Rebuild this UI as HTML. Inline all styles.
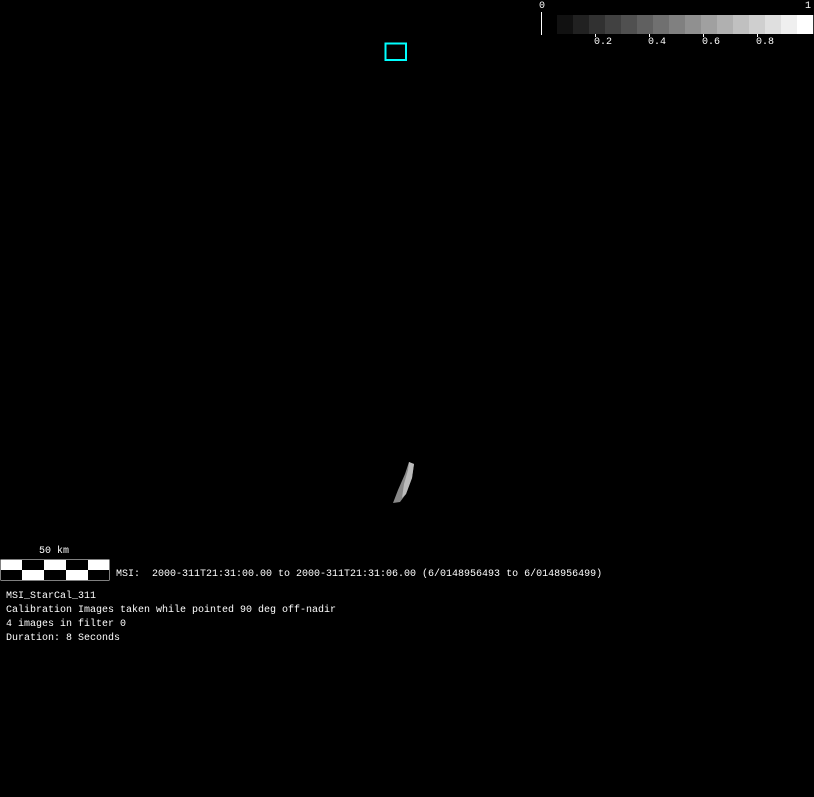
<!DOCTYPE html>
<html><head><meta charset="utf-8"><style>
body{margin:0;width:814px;height:797px;background:#000;position:relative;overflow:hidden;font-family:"Liberation Mono",monospace;font-size:10px;color:#fff}
.a{position:absolute;white-space:pre;line-height:12px}
</style></head><body>
<svg width="814" height="797" style="position:absolute;left:0;top:0">
<rect x="385.5" y="43.5" width="20.5" height="16.5" fill="none" stroke="#0ff" stroke-width="2"/>
<line x1="541.5" y1="12" x2="541.5" y2="35" stroke="#fff"/>
<g id="cb"></g>
<line x1="595.5" y1="34" x2="595.5" y2="37" stroke="#fff"/>
<line x1="649.5" y1="34" x2="649.5" y2="37" stroke="#fff"/>
<line x1="703.5" y1="34" x2="703.5" y2="37" stroke="#fff"/>
<line x1="757.5" y1="34" x2="757.5" y2="37" stroke="#fff"/>
<rect x="0.5" y="559.5" width="109" height="21" fill="#fff"/>
<rect x="22" y="560" width="22" height="10" fill="#000"/>
<rect x="66" y="560" width="22" height="10" fill="#000"/>
<rect x="1" y="570" width="21" height="10" fill="#000"/>
<rect x="44" y="570" width="22" height="10" fill="#000"/>
<rect x="88" y="570" width="21" height="10" fill="#000"/>
<path d="M409 462 L414 464 L412 478 L406 494 L400 502 L393 503 L398 490 L405 474 Z" fill="#888"/>
<path d="M409 462 L414 464 L412 478 L406 494 L402 498 L404 484 L408 470 Z" fill="#bbb"/>
</svg>
<script>
var g=document.getElementById('cb'),s='';
for(var i=0;i<16;i++){var v=Math.round(17+i*(238/15));s+='<rect x="'+(557+i*16)+'" y="15" width="16.2" height="19" fill="rgb('+v+','+v+','+v+')"/>';}
g.innerHTML=s;
</script>
<div class="a" style="left:539px;top:1px">0</div>
<div class="a" style="left:805px;top:1px">1</div>
<div class="a" style="left:594px;top:37px">0.2</div>
<div class="a" style="left:648px;top:37px">0.4</div>
<div class="a" style="left:702px;top:37px">0.6</div>
<div class="a" style="left:756px;top:37px">0.8</div>
<div class="a" style="left:39px;top:546px">50 km</div>
<div class="a" style="left:116px;top:569px">MSI:  2000-311T21:31:00.00 to 2000-311T21:31:06.00 (6/0148956493 to 6/0148956499)</div>
<div class="a" style="left:6px;top:591px">MSI_StarCal_311</div>
<div class="a" style="left:6px;top:605px">Calibration Images taken while pointed 90 deg off-nadir</div>
<div class="a" style="left:6px;top:619px">4 images in filter 0</div>
<div class="a" style="left:6px;top:633px">Duration: 8 Seconds</div>
</body></html>
